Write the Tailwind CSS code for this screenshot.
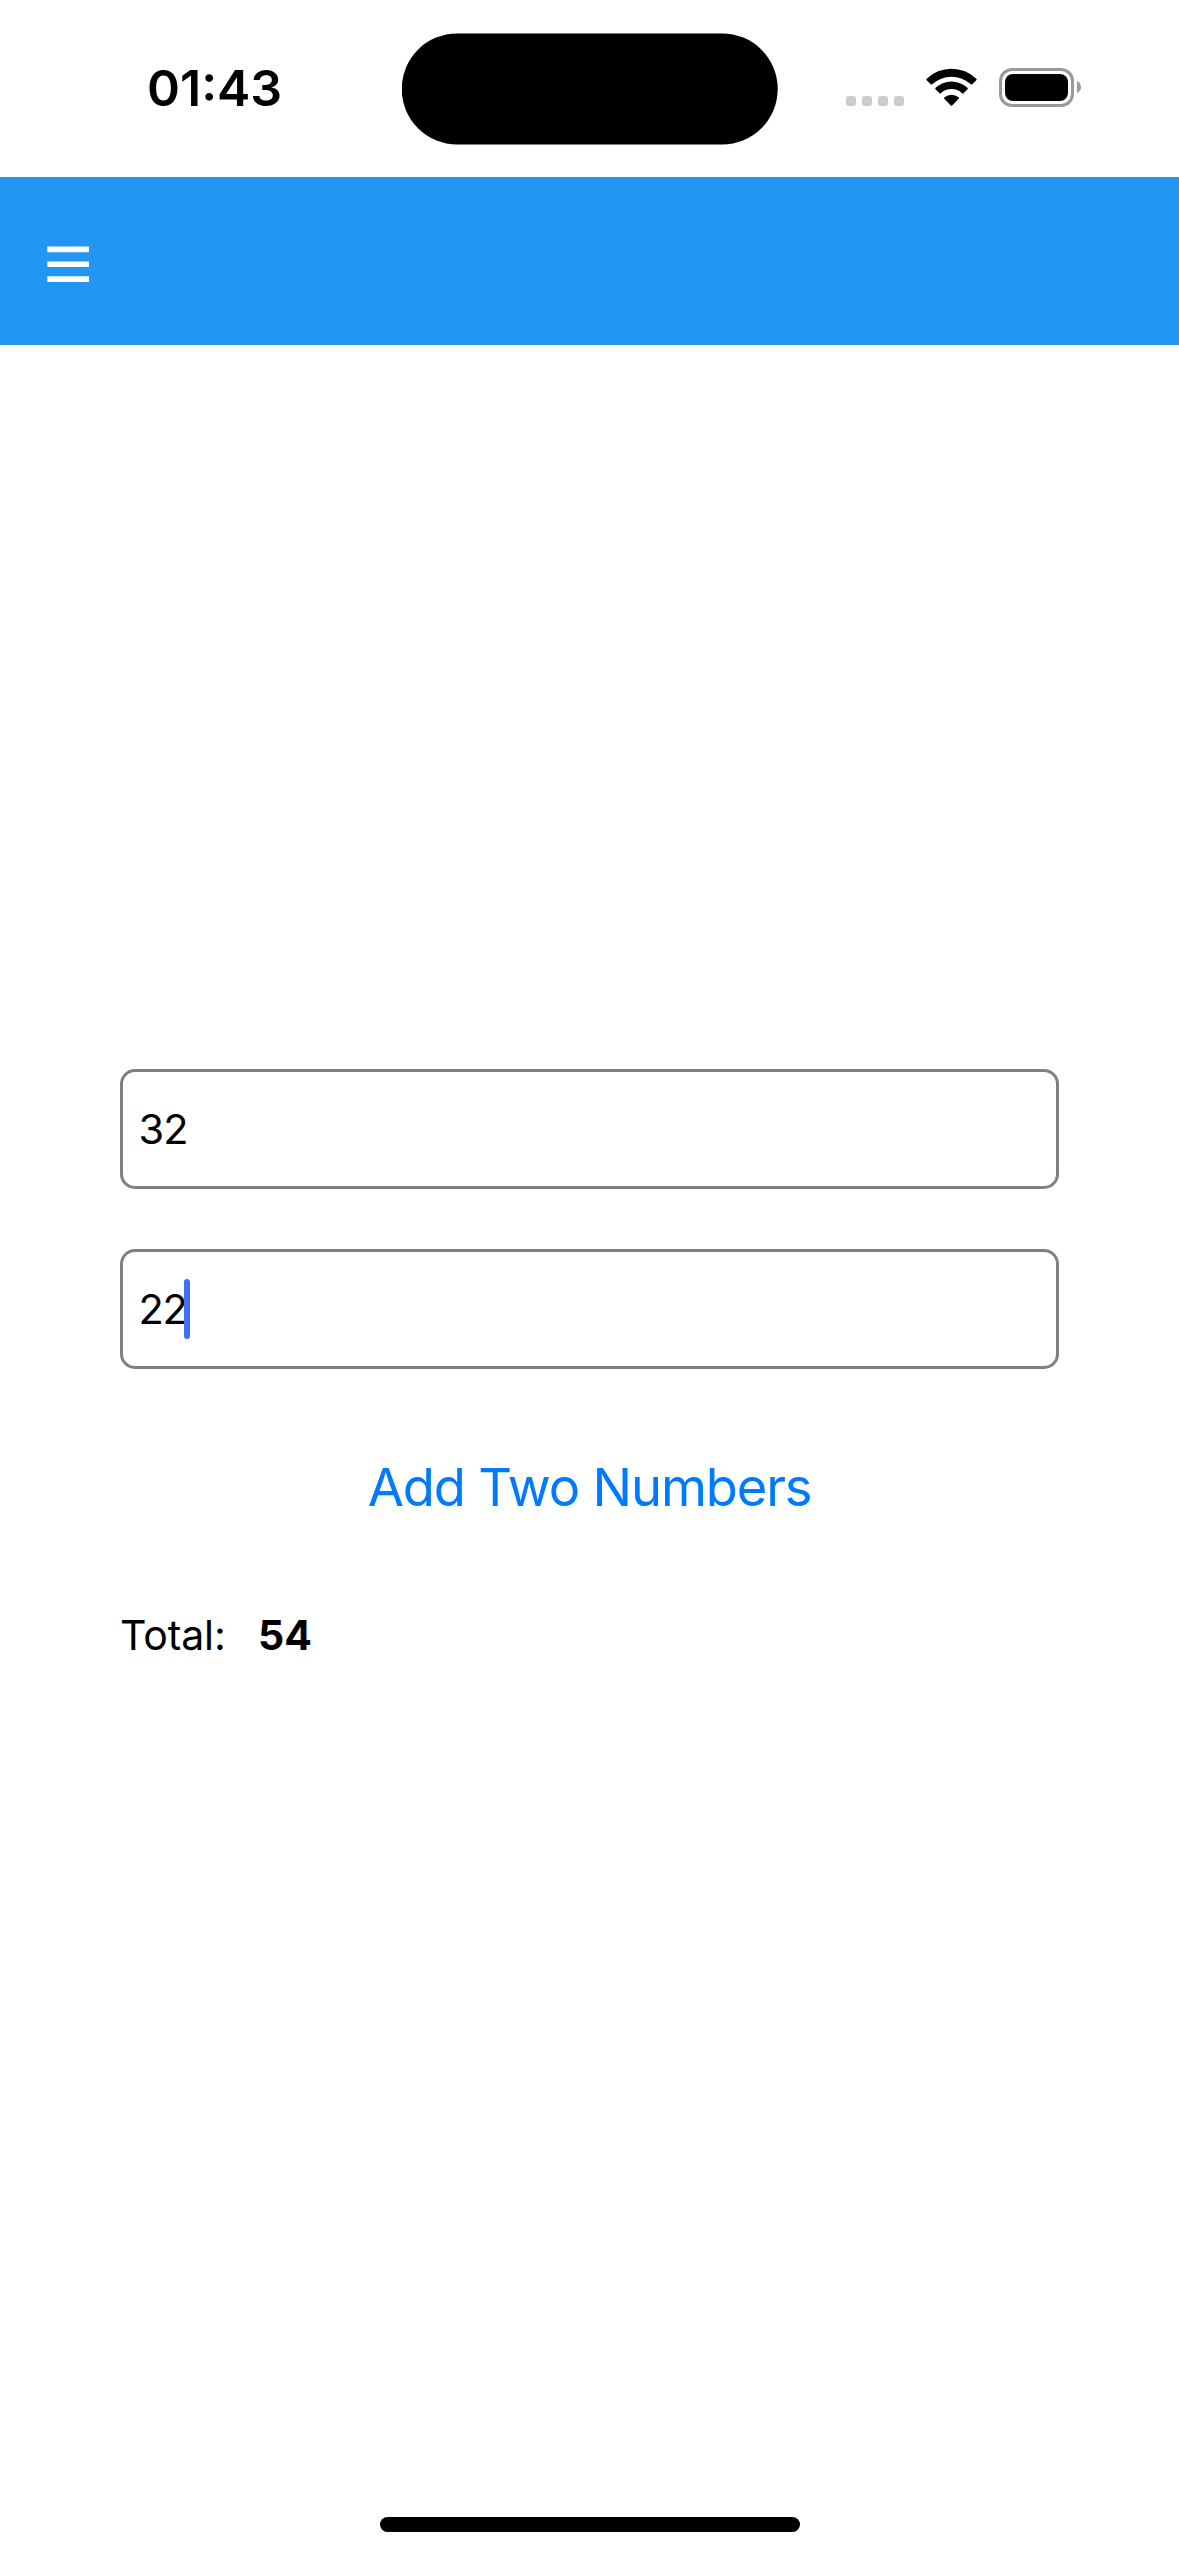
<!DOCTYPE html>
<html lang="en">
<head>
<meta charset="utf-8">
<title>Add Two Numbers</title>
<script src="https://cdn.jsdelivr.net/npm/@tailwindcss/browser@4"></script>
</head>
<body class="flex h-[2556px] w-[1179px] flex-col overflow-hidden bg-white font-['Inter',sans-serif] text-black">

  <!-- Status bar -->
  <div class="grid h-[177px] shrink-0 grid-cols-[401.6px_376px_1fr] items-start">
    <div class="pt-[58px] pl-[147px] text-[50px] leading-[60px] font-semibold">01:43</div>
    <svg class="mt-[33px] h-[112px] w-[377px]" viewBox="0 0 377 112">
      <rect x="-.3" y=".4" width="376" height="111" rx="55.500"/>
    </svg>
    <div class="flex items-start pt-[68px] pl-[68.4px]">
      <div class="mt-[28px] flex gap-[6px]">
        <i class="size-[10px] rounded-[3px] bg-[#cccccc]"></i>
        <i class="size-[10px] rounded-[3px] bg-[#cccccc]"></i>
        <i class="size-[10px] rounded-[3px] bg-[#cccccc]"></i>
        <i class="size-[10px] rounded-[3px] bg-[#cccccc]"></i>
      </div>
      <svg class="ml-[22px] h-[38px] w-[51px]" viewBox="0 0 153 114">
        <path d="M2 32.5A106 106 0 0 1 151 32.5Q153 34.5 151 36.5L138.500 49Q136.500 51 134.500 49A84.500 84.500 0 0 0 18.500 49Q16.500 51 14.500 49L2 36.500Q0 34.500 2 32.500Z"/>
        <path d="M28.500 59.500A70 70 0 0 1 124.500 59.500Q126.500 61.500 124.500 63.500L112.500 75.500Q110.500 77.500 108.500 75.500A48 48 0 0 0 44.500 75.500Q42.500 77.500 40.500 75.500L28.500 63.500Q26.500 61.500 28.500 59.500Z"/>
        <path d="M55.500 88A32 32 0 0 1 97.500 88Q100 90 98 92.500L78.500 112.500Q76.500 114.500 74.500 112.500L55 92.500Q53 90 55.500 88Z"/>
      </svg>
      <div class="ml-[22px] h-[39px] w-[75px] rounded-[13px] border-[3px] border-[#999999] p-[3px]">
        <div class="h-full rounded-[8px] bg-black"></div>
      </div>
      <svg class="mt-[13px] ml-[3px] h-[12px] w-[4px]" viewBox="0 0 4 12">
        <path fill="#999999" d="M0 0Q4 2 4 6Q4 10 0 12Z"/>
      </svg>
    </div>
  </div>

  <!-- App bar -->
  <header class="flex h-[168px] shrink-0 items-start bg-[#2196f3] pt-[69px] pl-[47px]">
    <svg class="h-[37px] w-[42px]" viewBox="0 0 42 37">
      <path fill="#ffffff" d="M.3 .5H42V6.200H.3ZM.3 15.400H42V21H.3ZM.3 30.200H42V36H.3Z"/>
    </svg>
  </header>

  <!-- Form -->
  <main class="flex flex-1 flex-col px-[120px] pt-[724px]">
    <div class="flex h-[120px] items-center rounded-[15px] border-[3px] border-[#808080] pl-[15.5px] text-[41.5px] leading-[50px] tracking-[-0.9px]">32</div>
    <div class="mt-[60px] flex h-[120px] items-center rounded-[15px] border-[3px] border-[#808080] pl-[15.5px] text-[41.5px] leading-[50px] tracking-[-1.2px]">
      <span>22</span>
      <span class="ml-[-2.8px] h-[60px] w-[6px] rounded-full bg-[#416ef5]"></span>
    </div>
    <button class="mt-[81px] h-[74px] text-center text-[52.5px] leading-[74px] tracking-[-1.15px] text-[#007aff]">Add Two Numbers</button>
    <div class="mt-[86px] flex text-[41px] leading-[50px]">
      <span class="w-[138px] tracking-[-0.1px]">Total:</span>
      <span class="font-bold">54</span>
    </div>
  </main>

  <!-- Home indicator -->
  <div class="mb-[24px] h-[15px] w-[420px] shrink-0 self-center rounded-full bg-black"></div>
</body>
</html>
